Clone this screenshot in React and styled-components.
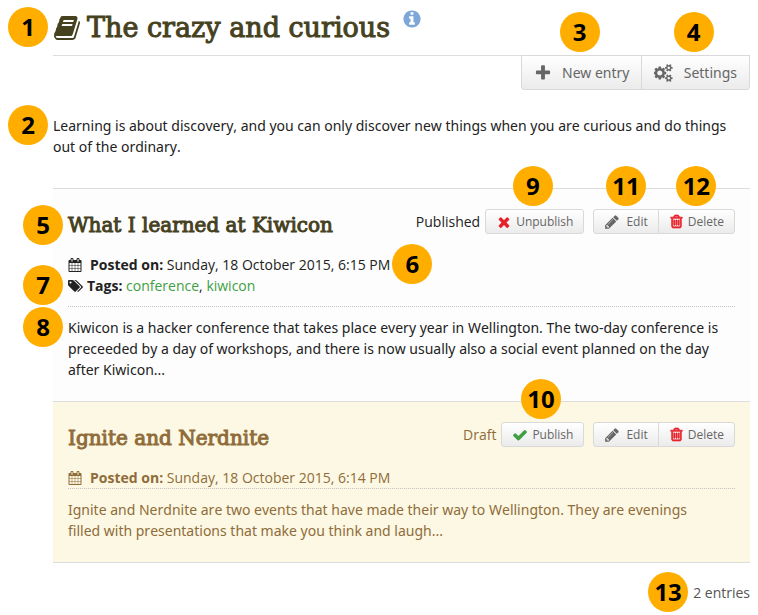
import React, { useState } from 'react';
import styled, { createGlobalStyle, css } from 'styled-components';

const GlobalStyle = createGlobalStyle`
  * {
    box-sizing: border-box;
  }

  body {
    margin: 0;
    background: #fff;
    color: #222;
    font-family: 'Open Sans', 'Noto Sans', sans-serif;
    font-size: 14px;
    font-kerning: none;
    line-height: 21px;
  }
`;

const glyphs = {
  book: {
    width: 1792,
    d: 'M1703 478q40 57 18 129l-275 906q-19 64-76.5 107.5t-122.5 43.5h-923q-77 0-148.5-53.5t-99.5-131.5q-24-67-2-127 0-4 3-27t4-37q1-8-3-21.5t-3-19.5q2-11 8-21t16.5-23.5 16.5-23.5q23-38 45-91.5t30-91.5q3-10 .5-30t-.5-28q3-11 17-28t17-23q21-36 42-92t25-90q1-9-2.5-32t.5-28q4-13 22-30.5t22-22.5q19-26 42.5-84.5t27.5-96.5q1-8-3-25.5t-2-26.5q2-8 9-18t18-23 17-21q8-12 16.5-30.5t15-35 16-36 19.5-32 26.5-23.5 36-11.5 47.5 5.5l-1 3q38-9 51-9h761q74 0 114 56t18 130l-274 906q-36 119-71.5 153.5t-128.5 34.5h-869q-27 0-38 15-11 16-1 43 24 70 144 70h923q29 0 56-15.5t35-41.5l300-987q7-22 5-57 38 15 59 43zm-1064 2q-4 13 2 22.5t20 9.5h608q13 0 25.5-9.5t16.5-22.5l21-64q4-13-2-22.5t-20-9.5h-608q-13 0-25.5 9.5t-16.5 22.5zm-83 256q-4 13 2 22.5t20 9.5h608q13 0 25.5-9.5t16.5-22.5l21-64q4-13-2-22.5t-20-9.5h-608q-13 0-25.5 9.5t-16.5 22.5z',
  },
  info: {
    width: 1792,
    d: 'M1152 1376v-160q0-14-9-23t-23-9h-96v-512q0-14-9-23t-23-9h-320q-14 0-23 9t-9 23v160q0 14 9 23t23 9h96v320h-96q-14 0-23 9t-9 23v160q0 14 9 23t23 9h448q14 0 23-9t9-23zm-128-896v-160q0-14-9-23t-23-9h-192q-14 0-23 9t-9 23v160q0 14 9 23t23 9h192q14 0 23-9t9-23zm640 416q0 209-103 385.5t-279.5 279.5-385.5 103-385.5-103-279.5-279.5-103-385.5 103-385.5 279.5-279.5 385.5-103 385.5 103 279.5 279.5 103 385.5z',
  },
  plus: {
    width: 1792,
    d: 'M1600 736v192q0 40-28 68t-68 28h-416v416q0 40-28 68t-68 28h-192q-40 0-68-28t-28-68v-416h-416q-40 0-68-28t-28-68v-192q0-40 28-68t68-28h416v-416q0-40 28-68t68-28h192q40 0 68 28t28 68v416h416q40 0 68 28t28 68z',
  },
  cogs: {
    width: 1920,
    d: 'M832 896q0-106-75-181t-181-75-181 75-75 181 75 181 181 75 181-75 75-181zm768 512q0-52-38-90t-90-38-90 38-38 90q0 53 37.5 90.5t90.5 37.5 90.5-37.5 37.5-90.5zm0-1024q0-52-38-90t-90-38-90 38-38 90q0 53 37.5 90.5t90.5 37.5 90.5-37.5 37.5-90.5zm-384 421v185q0 10-7 19.5t-16 10.5l-155 24q-11 35-32 76 34 48 90 115 7 11 7 20 0 12-7 19-23 30-82.5 89.5t-78.5 59.5q-11 0-21-7l-115-90q-37 19-77 31-11 108-23 155-7 24-30 24h-186q-11 0-20-7.5t-10-17.5l-23-153q-34-10-75-31l-118 89q-7 7-20 7-11 0-21-8-144-133-144-160 0-9 7-19 10-14 41-53t47-61q-23-44-35-82l-152-24q-10-1-17-9.5t-7-19.5v-185q0-10 7-19.5t16-10.5l155-24q11-35 32-76-34-48-90-115-7-11-7-20 0-12 7-20 22-30 82-89t79-59q11 0 21 7l115 90q34-18 77-32 11-108 23-154 7-24 30-24h186q11 0 20 7.5t10 17.5l23 153q34 10 75 31l118-89q8-7 20-7 11 0 21 8 144 133 144 160 0 8-7 19-12 16-42 54t-45 60q23 48 34 82l152 23q10 2 17 10.5t7 19.5zm640 533v140q0 16-149 31-12 27-30 52 51 113 51 138 0 4-4 7-122 71-124 71-8 0-46-47t-52-68q-20 2-30 2t-30-2q-14 21-52 68t-46 47q-2 0-124-71-4-3-4-7 0-25 51-138-18-25-30-52-149-15-149-31v-140q0-16 149-31 13-29 30-52-51-113-51-138 0-4 4-7 4-2 35-20t59-34 30-16q8 0 46 46.5t52 67.5q20-2 30-2t30 2q51-71 92-112l6-2q4 0 124 70 4 3 4 7 0 25-51 138 17 23 30 52 149 15 149 31zm0-1024v140q0 16-149 31-12 27-30 52 51 113 51 138 0 4-4 7-122 71-124 71-8 0-46-47t-52-68q-20 2-30 2t-30-2q-14 21-52 68t-46 47q-2 0-124-71-4-3-4-7 0-25 51-138-18-25-30-52-149-15-149-31v-140q0-16 149-31 13-29 30-52-51-113-51-138 0-4 4-7 4-2 35-20t59-34 30-16q8 0 46 46.5t52 67.5q20-2 30-2t30 2q51-71 92-112l6-2q4 0 124 70 4 3 4 7 0 25-51 138 17 23 30 52 149 15 149 31z',
  },
  times: {
    width: 1792,
    d: 'M1490 1322q0 40-28 68l-136 136q-28 28-68 28t-68-28l-294-294-294 294q-28 28-68 28t-68-28l-136-136q-28-28-28-68t28-68l294-294-294-294q-28-28-28-68t28-68l136-136q28-28 68-28t68 28l294 294 294-294q28-28 68-28t68 28l136 136q28 28 28 68t-28 68l-294 294 294 294q28 28 28 68z',
  },
  check: {
    width: 1792,
    d: 'M1671 566q0 40-28 68l-724 724-136 136q-28 28-68 28t-68-28l-136-136-362-362q-28-28-28-68t28-68l136-136q28-28 68-28t68 28l294 295 656-657q28-28 68-28t68 28l136 136q28 28 28 68z',
  },
  pencil: {
    width: 1792,
    d: 'M491 1536l91-91-235-235-91 91v107h128v128h107zm523-928q0-22-22-22-10 0-17 7l-542 542q-7 7-7 17 0 22 22 22 10 0 17-7l542-542q7-7 7-17zm-54-192l416 416-832 832h-416v-416zm683 96q0 53-37 90l-166 166-416-416 166-165q36-38 90-38 53 0 91 38l235 234q37 39 37 91z',
  },
  trash: {
    width: 1792,
    stroke: 90,
    d: 'M704 736v576q0 14-9 23t-23 9h-64q-14 0-23-9t-9-23v-576q0-14 9-23t23-9h64q14 0 23 9t9 23zm256 0v576q0 14-9 23t-23 9h-64q-14 0-23-9t-9-23v-576q0-14 9-23t23-9h64q14 0 23 9t9 23zm256 0v576q0 14-9 23t-23 9h-64q-14 0-23-9t-9-23v-576q0-14 9-23t23-9h64q14 0 23 9t9 23zm128 724v-948h-896v948q0 22 7 40.5t14.5 27 10.5 8.5h832q3 0 10.5-8.5t14.5-27 7-40.5zm-672-1076h448l-48-117q-7-9-17-11h-317q-10 2-17 11zm928 32v64q0 14-9 23t-23 9h-96v948q0 83-47 143.5t-113 60.5h-832q-66 0-113-58.5t-47-141.5v-952h-96q-14 0-23-9t-9-23v-64q0-14 9-23t23-9h309l70-167q15-37 54-63t79-26h320q40 0 79 26t54 63l70 167h309q14 0 23 9t9 23z',
  },
  calendar: {
    width: 1792,
    d: 'M192 1664h288v-288h-288v288zm352 0h320v-288h-320v288zm-352-352h288v-320h-288v320zm352 0h320v-320h-320v320zm-352-384h288v-288h-288v288zm736 736h320v-288h-320v288zm-384-736h320v-288h-320v288zm768 736h288v-288h-288v288zm-384-352h320v-320h-320v320zm-352-864v-288q0-13-9.5-22.5t-22.5-9.5h-64q-13 0-22.5 9.5t-9.5 22.5v288q0 13 9.5 22.5t22.5 9.5h64q13 0 22.5-9.5t9.5-22.5zm736 864h288v-320h-288v320zm-384-384h320v-288h-320v288zm384 0h288v-288h-288v288zm32-480v-288q0-13-9.5-22.5t-22.5-9.5h-64q-13 0-22.5 9.5t-9.5 22.5v288q0 13 9.5 22.5t22.5 9.5h64q13 0 22.5-9.5t9.5-22.5zm384-64v1280q0 52-38 90t-90 38h-1408q-52 0-90-38t-38-90v-1280q0-52 38-90t90-38h128v-96q0-66 47-113t113-47h64q66 0 113 47t47 113v96h384v-96q0-66 47-113t113-47h64q66 0 113 47t47 113v96h128q52 0 90 38t38 90z',
  },
  tags: {
    width: 1920,
    d: 'M448 448q0-53-37.5-90.5t-90.5-37.5-90.5 37.5-37.5 90.5 37.5 90.5 90.5 37.5 90.5-37.5 37.5-90.5zm1067 576q0 53-37 90l-491 492q-39 37-91 37-53 0-90-37l-715-716q-38-37-64.5-101t-26.5-117v-416q0-52 38-90t90-38h416q53 0 117 26.5t102 64.5l715 714q37 39 37 91zm384 0q0 53-37 90l-491 492q-39 37-91 37-36 0-59-14t-53-45l470-470q37-37 37-90 0-52-37-91l-715-714q-38-38-102-64.5t-117-26.5h224q53 0 117 26.5t102 64.5l715 714q37 39 37 91z',
  },
};

const Svg = styled.svg`
  display: block;
  flex: none;
  height: ${(p) => p.$size}px;
  color: ${(p) => p.$color || 'inherit'};
  fill: currentColor;
  stroke: currentColor;
`;

const Icon = ({ name, size = 14, color }) => (
  <Svg $size={size} $color={color} viewBox={`0 0 ${glyphs[name].width} 1792`} aria-hidden="true">
    <path d={glyphs[name].d} strokeWidth={glyphs[name].stroke || 0} />
  </Svg>
);

const Page = styled.main`
  padding: 0 8px 0 53px;
`;

const Anchor = styled.div`
  position: relative;
`;

const places = {
  left: css`
    right: calc(100% + 5px);
    top: -10px;
  `,
  right: css`
    left: calc(100% + 2px);
    top: -10px;
  `,
  above: css`
    bottom: calc(100% + 3px);
    left: calc(50% - 22px);
  `,
};

/* Numbered circle that floats next to the part it explains */
const Marker = styled.span`
  position: absolute;
  z-index: 1;
  display: flex;
  align-items: center;
  justify-content: center;
  width: 40px;
  height: 40px;
  border-radius: 50%;
  background: #ffae00;
  color: #000;
  font-family: 'Open Sans', sans-serif;
  font-size: 24px;
  font-weight: 700;
  line-height: 40px;
  ${(p) => places[p.$place]}
`;

const Header = styled.header`
  border-bottom: 1px solid #ddd;
`;

const TitleRow = styled.div`
  position: relative;
  display: flex;
  align-items: center;
  gap: 6px;
  width: fit-content;
  height: 55px;
  color: #46411e;

  ${Marker} {
    top: 7px;
  }
`;

const Title = styled.h1`
  margin: 0;
  font-family: 'DejaVu Serif', serif;
  font-size: 27px;
  font-weight: 400;
  line-height: 40px;
  -webkit-text-stroke: 1px currentColor;
`;

const HelpButton = styled.button`
  align-self: flex-start;
  margin: 9px 0 0 6px;
  padding: 0;
  border: 0;
  background: none;
  color: #7da7d9;
  cursor: pointer;
`;

const ButtonGroup = styled.div`
  display: flex;

  > * + * {
    margin-left: -1px;
  }

  > :first-child > button {
    border-top-right-radius: 0;
    border-bottom-right-radius: 0;
  }

  > :last-child > button {
    border-top-left-radius: 0;
    border-bottom-left-radius: 0;
  }
`;

const Toolbar = styled(ButtonGroup)`
  justify-content: flex-end;
  margin-top: -1px;
`;

const Button = styled.button`
  display: flex;
  align-items: center;
  gap: ${(p) => (p.$tight ? 4 : 6)}px;
  height: 25px;
  padding: 0 10px;
  border: 1px solid #d9d9d9;
  border-radius: 3px;
  background: linear-gradient(#fff, #ebebeb);
  color: #666;
  font-family: inherit;
  font-size: 12px;
  line-height: 21px;
  white-space: nowrap;
  cursor: pointer;

  &:hover {
    background: #ebebeb;
  }
`;

const ToolbarButton = styled(Button)`
  gap: 10px;
  height: 35px;
  padding: 0 12px;
  border-top-left-radius: 0;
  border-top-right-radius: 0;
  font-family: 'Noto Sans', 'Open Sans', sans-serif;
  font-size: 14px;
`;

const Intro = styled.p`
  position: relative;
  margin: 25px 0 31px;
  font-family: 'Noto Sans', 'Open Sans', sans-serif;
`;

const Entry = styled.article`
  padding: 0 15px 21px;
  border-top: 1px solid #ddd;
  background: ${(p) => (p.$draft ? '#fcf8e3' : '#fdfdfd')};
  color: ${(p) => (p.$draft ? '#8f6c3a' : '#222')};
`;

const EntryHead = styled.div`
  display: flex;
  justify-content: space-between;
  align-items: flex-start;
  height: 65px;
  padding-top: 20px;
`;

const EntryTitle = styled.h2`
  position: relative;
  margin: 0;
  color: ${(p) => (p.$draft ? '#8f6c3a' : '#46411e')};
  font-family: 'DejaVu Serif', serif;
  font-size: 20px;
  font-weight: 400;
  line-height: 32px;
  -webkit-text-stroke: 1px currentColor;

  ${Marker} {
    top: -4px;
    -webkit-text-stroke: 0;
  }
`;

const Controls = styled.div`
  display: flex;
  align-items: center;
  gap: 9px;

  ${ButtonGroup} ${Marker} {
    left: calc(50% - 20px);
  }
`;

const Status = styled.div`
  display: flex;
  align-items: center;
  gap: 5px;
`;

const Meta = styled.div`
  padding-bottom: ${(p) => (p.$tagged ? 10 : 0)}px;
  border-bottom: 1px dotted #c4c4c4;
`;

const MetaLine = styled.div`
  position: relative;
  display: flex;
  align-items: center;
  gap: ${(p) => p.$gap}px;
  width: fit-content;
`;

const TagLink = styled.a`
  color: #3e9f43;
  text-decoration: none;

  &:hover {
    text-decoration: underline;
  }
`;

const EntryText = styled.p`
  position: relative;
  margin: 10px 0 0;
  font-family: 'Noto Sans', 'Open Sans', sans-serif;
  white-space: pre-line;
`;

const Footer = styled.footer`
  display: flex;
  justify-content: flex-end;
  padding: 19px 0 12px;
  border-top: 1px solid #ddd;
  color: #555;
`;

const entries = [
  {
    title: 'What I learned at Kiwicon',
    posted: 'Sunday, 18 October 2015, 6:15 PM',
    tags: ['conference', 'kiwicon'],
    text: 'Kiwicon is a hacker conference that takes place every year in Wellington. The two-day conference is preceeded by a day of workshops, and there is now usually also a social event planned on the day after Kiwicon...',
    published: true,
    markers: { title: 5, posted: 6, tags: 7, text: 8, publish: 9, edit: 11, remove: 12 },
  },
  {
    title: 'Ignite and Nerdnite',
    posted: 'Sunday, 18 October 2015, 6:14 PM',
    tags: [],
    text: 'Ignite and Nerdnite are two events that have made their way to Wellington. They are evenings\nfilled with presentations that make you think and laugh...',
    published: false,
    markers: { publish: 10 },
  },
];

const Note = ({ n, place }) => (n ? <Marker $place={place}>{n}</Marker> : null);

const JournalEntry = ({ entry }) => {
  const [published, setPublished] = useState(entry.published);
  const { markers } = entry;

  return (
    <Entry $draft={!published}>
      <EntryHead>
        <EntryTitle $draft={!published}>
          <Note n={markers.title} place="left" />
          {entry.title}
        </EntryTitle>
        <Controls>
          <Status>
            {published ? 'Published' : 'Draft'}
            <Anchor>
              <Note n={markers.publish} place="above" />
              <Button type="button" $tight onClick={() => setPublished(!published)}>
                {published ? <Icon name="times" size={16} color="#e8202a" /> : <Icon name="check" size={16} color="#3e9f43" />}
                {published ? 'Unpublish' : 'Publish'}
              </Button>
            </Anchor>
          </Status>
          <ButtonGroup>
            <Anchor>
              <Note n={markers.edit} place="above" />
              <Button type="button"><Icon name="pencil" size={16} />Edit</Button>
            </Anchor>
            <Anchor>
              <Note n={markers.remove} place="above" />
              <Button type="button" $tight><Icon name="trash" size={15} color="#e8202a" />Delete</Button>
            </Anchor>
          </ButtonGroup>
        </Controls>
      </EntryHead>
      <Meta $tagged={entry.tags.length > 0}>
        <MetaLine $gap={8}>
          <Icon name="calendar" />
          <span><strong>Posted on:</strong> {entry.posted}</span>
          <Note n={markers.posted} place="right" />
        </MetaLine>
        {entry.tags.length > 0 && (
          <MetaLine $gap={4}>
            <Note n={markers.tags} place="left" />
            <Icon name="tags" />
            <span>
              <strong>Tags:</strong>{' '}
              {entry.tags.map((tag, i) => (
                <React.Fragment key={tag}>
                  {i > 0 && ', '}
                  <TagLink href={`#${tag}`}>{tag}</TagLink>
                </React.Fragment>
              ))}
            </span>
          </MetaLine>
        )}
      </Meta>
      <EntryText>
        <Note n={markers.text} place="left" />
        {entry.text}
      </EntryText>
    </Entry>
  );
};

const App = () => (
  <>
    <GlobalStyle />
    <Page>
      <Header>
        <TitleRow>
          <Note n={1} place="left" />
          <Icon name="book" size={28} />
          <Title>The crazy and curious</Title>
          <HelpButton type="button" aria-label="Help">
            <Icon name="info" size={20} />
          </HelpButton>
        </TitleRow>
      </Header>
      <Toolbar>
        <Anchor>
          <Note n={3} place="above" />
          <ToolbarButton type="button"><Icon name="plus" size={18} />New entry</ToolbarButton>
        </Anchor>
        <Anchor>
          <Note n={4} place="above" />
          <ToolbarButton type="button"><Icon name="cogs" size={18} />Settings</ToolbarButton>
        </Anchor>
      </Toolbar>
      <Intro>
        <Note n={2} place="left" />
        Learning is about discovery, and you can only discover new things when you are curious and do
        things out of the ordinary.
      </Intro>
      {entries.map((entry) => (
        <JournalEntry key={entry.title} entry={entry} />
      ))}
      <Footer>
        <Anchor>
          <Note n={13} place="left" />
          2 entries
        </Anchor>
      </Footer>
    </Page>
  </>
);

export default App;
